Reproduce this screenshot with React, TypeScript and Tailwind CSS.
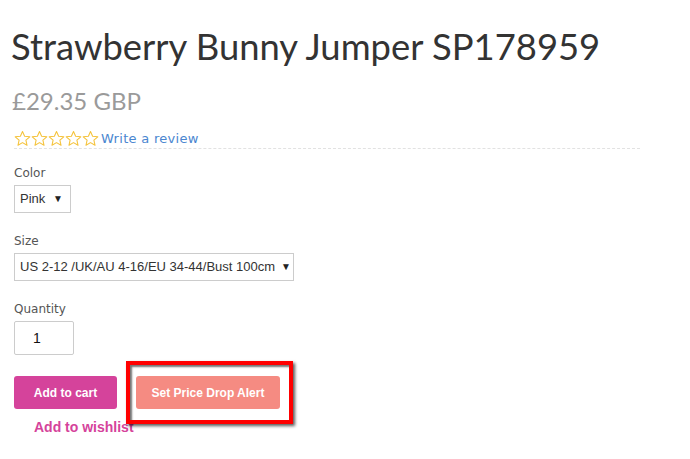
// outline star used in the rating row
const StarOutline = () => (
  <svg width="17" height="17" viewBox="0 0 24 24" fill="none">
    <path
      d="M12 2.2l3 6.7 7.3.7-5.5 4.8 1.6 7.2L12 17.8l-6.4 3.8 1.6-7.2-5.5-4.8 7.3-.7z"
      stroke="#f5c33b"
      strokeWidth="1.5"
      strokeLinejoin="round"
    />
  </svg>
)

const FakeSelect = ({ value, width, pr }: { value: string; width: string; pr: string }) => (
  <div
    className={`${width} ${pr} h-[28px] flex items-center justify-between gap-[6px] pl-[5px] border border-[#cccccc] bg-white text-[13px] text-[#333] font-['Liberation_Sans',Arial,sans-serif]`}
  >
    <span className="whitespace-nowrap">{value}</span>
    <span className="text-[10px] text-[#222] leading-none">▼</span>
  </div>
)

const labelCls =
  "text-[12px] leading-[14px] text-[#555] font-['DejaVu_Sans',Verdana,sans-serif]"

export default function App() {
  return (
    <div className="w-[690px] h-[459px] bg-white overflow-hidden pl-[14px] pt-[24px]">
      {/* Title */}
      <h1 className="-ml-[3px] whitespace-nowrap text-[36.4px] leading-[44px] text-[#333] font-['Lato',sans-serif] font-normal">
        Strawberry Bunny Jumper SP178959
      </h1>

      {/* Price */}
      <div className="-ml-[2px] mt-[19px] whitespace-nowrap text-[24px] leading-[28px] text-[#9a9a9a] font-['Lato',sans-serif]">
        £29.35 GBP
      </div>

      {/* Rating */}
      <div className="mt-[14px] w-[626px] h-[20px] flex items-end border-b border-dashed border-[#e2e2e2]">
        <div className="flex mb-[1px]">
          <StarOutline />
          <StarOutline />
          <StarOutline />
          <StarOutline />
          <StarOutline />
        </div>
        <a className="ml-[2px] text-[13px] leading-[19px] text-[#4a86d0] tracking-[0.3px] font-['DejaVu_Sans',Verdana,sans-serif]">
          Write a review
        </a>
      </div>

      {/* Color */}
      <div className={`mt-[17px] ${labelCls}`}>Color</div>
      <div className="mt-[5px]">
        <FakeSelect value="Pink" width="w-[57px]" pr="pr-[7px]" />
      </div>

      {/* Size */}
      <div className={`mt-[21px] ${labelCls}`}>Size</div>
      <div className="mt-[5px]">
        <FakeSelect value="US 2-12 /UK/AU 4-16/EU 34-44/Bust 100cm" width="w-[280px]" pr="pr-[4px]" />
      </div>

      {/* Quantity */}
      <div className={`mt-[21px] ${labelCls}`}>Quantity</div>
      <div className="mt-[5px] w-[60px] h-[34px] flex items-center pl-[18px] border border-[#cccccc] rounded-[2px] text-[14px] text-[#111] font-['Liberation_Sans',Arial,sans-serif]">
        1
      </div>

      {/* Actions */}
      <div className="mt-[21px] flex gap-[19px]">
        <button className="w-[103px] h-[33px] rounded-[3px] bg-[#d5439b] text-white text-[12px] font-bold font-['Liberation_Sans',Arial,sans-serif]">
          Add to cart
        </button>
        <div className="relative">
          {/* annotation box drawn over the button */}
          <div className="absolute -left-[10px] -right-[13px] -top-[15px] -bottom-[15px] border-[4px] border-[#ff0000] shadow-[2px_2px_3px_rgba(0,0,0,0.65),inset_2px_2px_2px_rgba(0,0,0,0.55)]" />
          <button className="relative w-[144px] h-[33px] rounded-[3px] bg-[#f58b82] text-white text-[12px] font-bold font-['Liberation_Sans',Arial,sans-serif]">
            Set Price Drop Alert
          </button>
        </div>
      </div>

      <div className="mt-[10px] ml-[20px] text-[14px] leading-[16px] font-bold text-[#d5439b] font-['Liberation_Sans',Arial,sans-serif]">
        Add to wishlist
      </div>
    </div>
  )
}
